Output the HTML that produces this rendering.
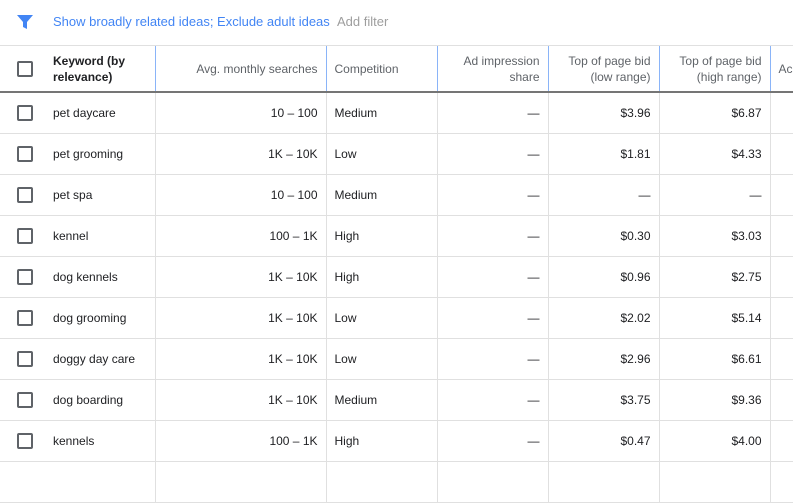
<!DOCTYPE html><html><head><style>
body{margin:0;width:793px;height:468px;overflow:hidden;background:#fff;font-family:"Liberation Sans",Arial,sans-serif;font-size:12px;color:#202124}
.bar{height:45px;border-bottom:1px solid #e0e0e0;position:relative}
.bar svg{position:absolute;left:16px;top:13px}
.bar .l{position:absolute;left:53px;top:14px;color:#4285f4;font-size:13px}
.bar .a{position:absolute;left:337px;top:14px;color:#9e9e9e;font-size:13px}
table{border-collapse:collapse;table-layout:fixed;width:820px}
td,th{padding:0 8px;white-space:nowrap;overflow:hidden}
th{height:45px;font-weight:normal;color:#5f6368;text-align:right;border-left:1px solid #8ab4f8;border-bottom:2px solid #757575;line-height:16px;font-size:12px}
td{height:40px;border-bottom:1px solid #e0e0e0;border-left:1px solid #e0e0e0;text-align:right}
th.c0,td.c0{border-left:none;padding:0;text-align:center}
th.k{color:#202124;font-weight:bold;text-align:left;border-left:none;padding-left:4px}
td.k{text-align:left;border-left:none;padding-left:4px}
.tl{text-align:left!important}
.cb{display:inline-block;width:12px;height:12px;border:2px solid #5f6368;border-radius:2px;vertical-align:middle}
</style></head><body>
<div class="bar"><svg width="18" height="18" viewBox="0 0 18 18"><path d="M1 2h16l-6 7v7l-4-2V9z" fill="#4285f4"/></svg>
<span class="l">Show broadly related ideas; Exclude adult ideas</span><span class="a">Add filter</span></div>
<table>
<colgroup><col style="width:49px"><col style="width:106px"><col style="width:171px"><col style="width:111px"><col style="width:111px"><col style="width:111px"><col style="width:111px"><col style="width:50px"></colgroup>
<tr><th class="c0"><span class="cb"></span></th><th class="k">Keyword (by<br>relevance)</th><th>Avg. monthly searches</th><th class="tl">Competition</th><th>Ad impression<br>share</th><th>Top of page bid<br>(low range)</th><th>Top of page bid<br>(high range)</th><th class="tl" style="color:#5f6368">Ac</th></tr>
<tr><td class="c0"><span class="cb"></span></td><td class="k">pet daycare</td><td>10 – 100</td><td class="tl">Medium</td><td>—</td><td>$3.96</td><td>$6.87</td><td></td></tr>
<tr><td class="c0"><span class="cb"></span></td><td class="k">pet grooming</td><td>1K – 10K</td><td class="tl">Low</td><td>—</td><td>$1.81</td><td>$4.33</td><td></td></tr>
<tr><td class="c0"><span class="cb"></span></td><td class="k">pet spa</td><td>10 – 100</td><td class="tl">Medium</td><td>—</td><td>—</td><td>—</td><td></td></tr>
<tr><td class="c0"><span class="cb"></span></td><td class="k">kennel</td><td>100 – 1K</td><td class="tl">High</td><td>—</td><td>$0.30</td><td>$3.03</td><td></td></tr>
<tr><td class="c0"><span class="cb"></span></td><td class="k">dog kennels</td><td>1K – 10K</td><td class="tl">High</td><td>—</td><td>$0.96</td><td>$2.75</td><td></td></tr>
<tr><td class="c0"><span class="cb"></span></td><td class="k">dog grooming</td><td>1K – 10K</td><td class="tl">Low</td><td>—</td><td>$2.02</td><td>$5.14</td><td></td></tr>
<tr><td class="c0"><span class="cb"></span></td><td class="k">doggy day care</td><td>1K – 10K</td><td class="tl">Low</td><td>—</td><td>$2.96</td><td>$6.61</td><td></td></tr>
<tr><td class="c0"><span class="cb"></span></td><td class="k">dog boarding</td><td>1K – 10K</td><td class="tl">Medium</td><td>—</td><td>$3.75</td><td>$9.36</td><td></td></tr>
<tr><td class="c0"><span class="cb"></span></td><td class="k">kennels</td><td>100 – 1K</td><td class="tl">High</td><td>—</td><td>$0.47</td><td>$4.00</td><td></td></tr>
<tr><td class="c0"></td><td class="k"></td><td></td><td></td><td></td><td></td><td></td><td></td></tr>
</table>
</body></html>
